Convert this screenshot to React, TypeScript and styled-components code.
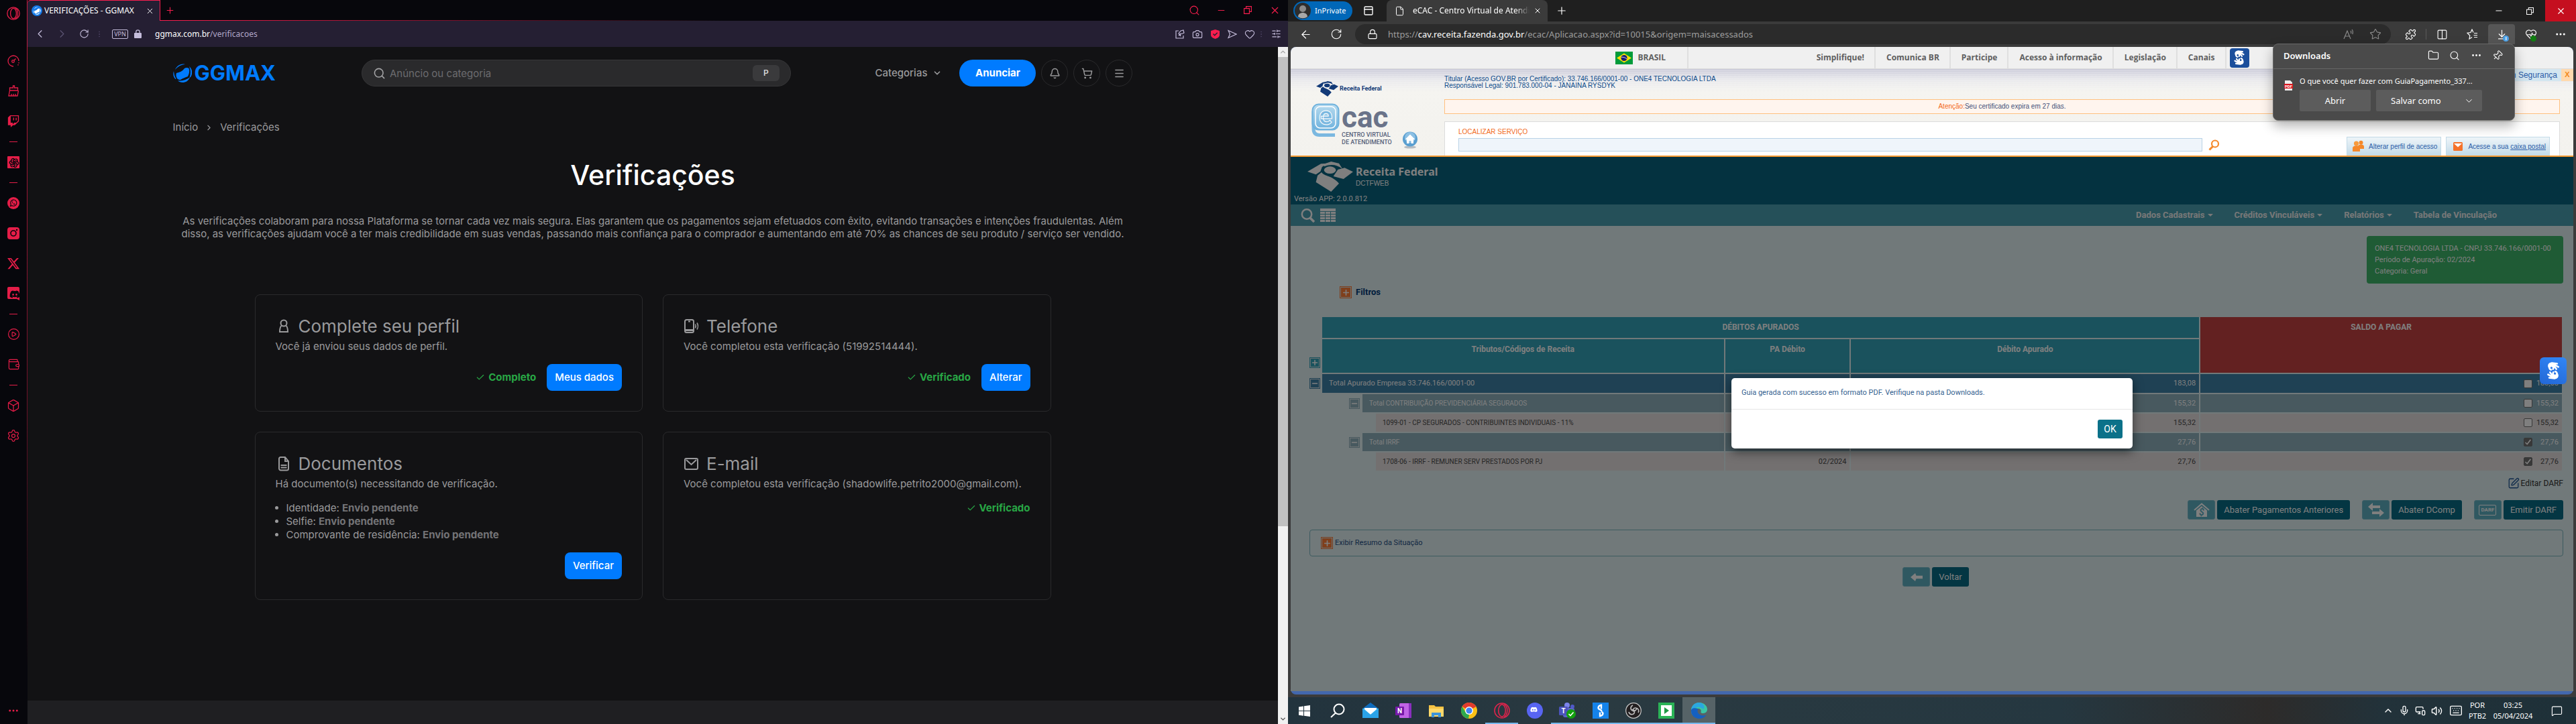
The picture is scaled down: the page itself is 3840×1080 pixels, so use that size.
import React from "react";
import styled, { createGlobalStyle, css } from "styled-components";
import {
  ArrowLeft, Bell, Camera, ChevronDown, ChevronLeft, ChevronRight, ChevronUp, Columns2, Box as BoxIcon,
  CirclePlay, EllipsisVertical, Ellipsis, File, Folder, Heart, HeartPulse, Keyboard, Lock, Menu,
  MessageSquare, Mic, Minus, Pin, Plus, Puzzle, RotateCw, Search, Settings, ShoppingCart,
  SlidersHorizontal, Star, Volume2, Wallet, X, ArrowDownToLine, SquarePen, PanelTop, Check, MonitorSmartphone,
} from "lucide-react";
import { FaDiscord, FaTwitch, FaXTwitter, FaHandsAslInterpreting } from "react-icons/fa6";
import { TbBrandOpenai } from "react-icons/tb";

const inter = `Inter, "Open Sans", sans-serif`;
const segoe = `"Noto Sans", "Open Sans", sans-serif`;
const ubuntu = `Roboto, "Noto Sans", sans-serif`;
const arial = `"Liberation Sans", Arial, sans-serif`;
const pink = "#fa1e4e";

const Global = createGlobalStyle`
  *, *::before, *::after { box-sizing: border-box; }
  body { margin: 0; background: #121214; overflow: hidden; }
  button, input { font: inherit; color: inherit; margin: 0; }
  button { border: 0; padding: 0; background: none; cursor: pointer; }
  a { color: inherit; text-decoration: none; }
  h1, h2, p, ul { margin: 0; padding: 0; }
  svg { display: block; flex: none; }
`;

const Desktop = styled.div`
  display: grid;
  grid-template-columns: 1fr 1fr;
  height: 100vh;
`;

const Cell = styled.button<{ $w: number; $h?: number }>`
  width: ${(p) => p.$w}px;
  height: ${(p) => (p.$h ? p.$h + "px" : "100%")};
  flex: none;
  display: flex;
  align-items: center;
  justify-content: center;
`;

/* ---------- Opera window ---------- */

const Opera = styled.section`
  display: flex;
  min-width: 0;
  background: #07070c;
`;

const Sidebar = styled.nav`
  width: 41px;
  flex: none;
  display: flex;
  flex-direction: column;
  align-items: stretch;
  color: #e51d48;
  border-right: 1px solid;
  border-image: linear-gradient(#c41a40, #6d1229 55%, #07070c 92%) 1;
`;

const SideTop = styled.div`
  height: 68px;
  display: flex;
  justify-content: center;
  padding-top: 10px;
`;

const SideItem = styled.button`
  height: 45px;
  display: flex;
  align-items: center;
  justify-content: center;
`;

const SideDash = styled.div`
  height: 16px;
  display: flex;
  align-items: center;
  justify-content: center;
  &::before { content: ""; width: 12px; height: 1px; background: #e51d48; }
`;

const SideEnd = styled(SideItem)`
  height: 40px;
  margin-top: auto;
`;

const OperaMain = styled.div`
  flex: 1;
  min-width: 0;
  display: flex;
  flex-direction: column;
`;

const OperaTitle = styled.div`
  height: 31px;
  flex: none;
  display: flex;
  color: ${pink};
`;

const OperaTab = styled.div`
  width: 198px;
  display: flex;
  align-items: center;
  padding: 0 8px 0 6px;
  background: #251f33;
  border: 1px solid ${pink};
  border-bottom: 0;
  border-left: 0;
  border-top-left-radius: 5px;
  color: #fff;
  font: 12px/16px ${segoe};
  span { flex: 1; padding-left: 3px; white-space: nowrap; }
`;

const OperaTitleRest = styled.div`
  flex: 1;
  display: flex;
  border-bottom: 1px solid;
  border-image: linear-gradient(90deg, ${pink}, #07070c 50%) 1;
`;

const Grow = styled.div`
  flex: 1;
`;

const OperaBar = styled.div`
  height: 39px;
  flex: none;
  display: flex;
  align-items: center;
  padding: 0 0 0 2px;
  background: #251f33;
  color: #c5bddb;
`;

const Dots = styled.span<{ $w: number }>`
  width: ${(p) => p.$w}px;
  display: flex;
  justify-content: center;
  color: #4a4160;
`;

const Vpn = styled.button`
  width: 24px;
  height: 14px;
  margin: 0 9px 0 13px;
  border: 1px solid #c5bddb;
  border-radius: 2px;
  font: 9px/11px ${segoe};
`;

const OperaUrl = styled.div`
  margin-left: 20px;
  font: 12px/16px ${segoe};
  color: #b1a8c9;
  b { font-weight: 400; color: #fff; }
`;

const OperaBody = styled.div`
  flex: 1;
  min-height: 0;
  display: flex;
`;

const Site = styled.div`
  flex: 1;
  min-width: 0;
  display: flex;
  flex-direction: column;
  background: #121214;
  color: #9a9a9c;
  font: 15px/20px ${inter};
`;

const SiteInner = styled.div`
  width: 100%;
  max-width: 1431px;
  margin: 0 auto;
  padding-top: 19px;
`;

const SiteHeader = styled.header`
  height: 40px;
  display: flex;
  align-items: center;
  justify-content: space-between;
`;

const Brand = styled.a`
  width: 156px;
  display: flex;
  align-items: center;
  gap: 4px;
  color: #007bff;
  font: 700 31px/28px ${inter};
`;

const SearchBox = styled.label`
  width: 640px;
  height: 40px;
  display: flex;
  align-items: center;
  gap: 6px;
  padding: 0 16px;
  border: 1px solid #363638;
  border-radius: 20px;
  background: #2a2a2c;
  input {
    flex: 1;
    height: 30px;
    border: 0;
    padding: 0;
    outline: 0;
    background: none;
    &::placeholder { color: #6c6c6f; opacity: 1; }
  }
  kbd {
    width: 40px;
    border-radius: 6px;
    background: #3a3a3c;
    color: #d5d5d6;
    text-align: center;
    font: 600 12px/24px ${inter};
  }
`;

const HeaderActions = styled.div`
  display: flex;
  align-items: center;
  gap: 8px;
`;

const Categories = styled.button`
  display: flex;
  align-items: center;
  gap: 8px;
  margin-right: 18px;
  font-weight: 500;
`;

const Announce = styled.button`
  width: 114px;
  height: 40px;
  border-radius: 20px;
  background: #007bff;
  color: #fff;
  font-weight: 700;
`;

const Round = styled.button`
  width: 40px;
  height: 40px;
  display: flex;
  align-items: center;
  justify-content: center;
  border: 1px solid #2a2a2c;
  border-radius: 50%;
`;

const Crumbs = styled.nav`
  display: flex;
  align-items: center;
  gap: 10px;
  margin-top: 51px;
`;

const PageTitle = styled.h1`
  margin: 36px 0 34px;
  text-align: center;
  color: #fff;
  font: 500 41px/50px ${inter};
`;

const Intro = styled.p`
  line-height: 19px;
  text-align: center;
`;

const Cards = styled.div`
  display: grid;
  grid-template-columns: 1fr 1fr;
  gap: 30px;
  max-width: 1187px;
  margin: 81px auto 0;
`;

const Card = styled.article`
  padding: 30px;
  border: 1px solid #2a2a2c;
  border-radius: 8px;
`;

const CardTitle = styled.h2`
  display: flex;
  align-items: center;
  gap: 10px;
  margin-bottom: 3px;
  font: 400 26px/34px ${inter};
`;

const DocList = styled.ul`
  margin-top: 16px;
  padding-left: 16px;
`;

const Pending = styled.strong`
  color: #747477;
  font-weight: 700;
`;

const CardFoot = styled.div`
  display: flex;
  align-items: center;
  justify-content: flex-end;
  gap: 16px;
  margin-top: 16px;
`;

const Status = styled.span`
  display: flex;
  align-items: center;
  gap: 5px;
  color: #28a745;
  font-weight: 700;
`;

const Primary = styled.button`
  height: 40px;
  padding: 0 12px;
  border-radius: 8px;
  background: #007bff;
  color: #fff;
  font-weight: 500;
`;

const SiteFooter = styled.footer`
  height: 35px;
  margin-top: auto;
  background: #1f1f22;
`;

const Scroll = styled.div`
  width: 15px;
  flex: none;
  display: flex;
  flex-direction: column;
  background: #f1f1f1;
  color: #a3a3a3;
`;

const Thumb = styled.div`
  height: 700px;
  margin-bottom: auto;
  background: #c1c1c1;
`;

/* ---------- Edge window ---------- */

const Right = styled.div`
  min-width: 0;
  display: flex;
  flex-direction: column;
`;

const Edge = styled.section`
  position: relative;
  flex: 1;
  min-height: 0;
  display: flex;
  flex-direction: column;
  background: #3b3b3b;
  color: #fff;
  font: 11px/16px ${segoe};
`;

const EdgeTabs = styled.div`
  height: 32px;
  flex: none;
  display: flex;
  align-items: center;
  padding-left: 8px;
  background: #1f1f1f;
`;

const Private = styled.button`
  width: 88px;
  height: 28px;
  display: flex;
  align-items: center;
  gap: 6px;
  padding-left: 2px;
  margin-right: 16px;
  border-radius: 14px;
  background: #0067b8;
`;

const EdgeTab = styled.div`
  width: 240px;
  height: 32px;
  display: flex;
  align-items: center;
  gap: 12px;
  margin-left: 19px;
  padding: 0 9px 0 12px;
  border-radius: 8px 8px 0 0;
  background: #3b3b3b;
  span {
    flex: 1;
    min-width: 0;
    overflow: hidden;
    white-space: nowrap;
    font-size: 12px;
    mask-image: linear-gradient(90deg, #000 88%, transparent);
  }
  button { margin-left: -6px; }
`;

const CloseWin = styled(Cell)`
  background: #c50f1f;
`;

const EdgeBar = styled.div`
  height: 38px;
  flex: none;
  display: flex;
  align-items: center;
  padding: 0 4px;
`;

const Address = styled.div`
  flex: 1;
  height: 30px;
  display: flex;
  align-items: center;
  margin: 0 6px 0 5px;
  padding: 0 4px 0 18px;
  border-radius: 15px;
  background: #2b2b2b;
  color: #9d9d9d;
  font-size: 13px;
  span { flex: 1; padding-left: 15px; white-space: nowrap; }
  b { font-weight: 400; color: #fff; }
`;

const BarLine = styled.i`
  width: 1px;
  height: 16px;
  background: #5a5a5a;
`;

const DownloadButton = styled.button`
  position: relative;
  width: 40px;
  height: 30px;
  margin: 0 0 0 2px;
  display: flex;
  align-items: center;
  justify-content: center;
  border-radius: 4px 4px 0 0;
  background: #565656;
`;

const Badge = styled.i<{ $c: string }>`
  position: absolute;
  right: 9px;
  bottom: 4px;
  width: 9px;
  height: 9px;
  border-radius: 50%;
  background: ${(p) => p.$c};
  font: bold 8px/9px ${arial};
  text-align: center;
`;

const HealthCell = styled(Cell)`
  position: relative;
  ${Badge} { right: 16px; bottom: 8px; }
`;

const EdgePage = styled.div`
  flex: 1;
  min-height: 0;
  display: flex;
  flex-direction: column;
  margin: 0 4px 4px;
  border-radius: 8px;
  overflow: hidden;
  background: #4367ad;
`;

const GovBar = styled.div`
  height: 33px;
  flex: none;
  background: #f0f0f0;
  border-bottom: 1px solid #dcdcdc;
  color: #606060;
  font: 700 12px/16px "Open Sans", ${segoe};
`;

const GovInner = styled.div`
  height: 32px;
  max-width: 945px;
  margin: 0 auto;
  display: flex;
  align-items: center;
`;

const Brasil = styled.a`
  height: 100%;
  display: flex;
  align-items: center;
  gap: 8px;
  margin-right: auto;
  padding-right: 32px;
  border-right: 2px solid #dfdfdf;
`;

const GovLink = styled.a`
  height: 100%;
  display: flex;
  align-items: center;
  padding: 0 15px 0 16px;
  border-right: 2px solid #dfdfdf;
`;

const Vlibras = styled.button<{ $float?: boolean }>`
  width: 29px;
  height: 29px;
  margin-left: 5px;
  display: flex;
  align-items: center;
  justify-content: center;
  border-radius: 4px;
  background: #1b4f9c;
  color: #fff;
  svg { rotate: 70deg; }
  ${(p) =>
    p.$float &&
    css`
      position: absolute;
      top: 299px;
      right: 10px;
      width: 40px;
      height: 40px;
      border-radius: 6px;
      background: linear-gradient(200deg, #3186f6, #2368d6);
    `}
`;

const CacHeader = styled.header`
  position: relative;
  height: 131px;
  flex: none;
  display: grid;
  grid-template-columns: 229px 1fr;
  padding-right: 20px;
  border-bottom: 2px solid #f59a31;
  background:
    repeating-linear-gradient(transparent 0 2px, rgba(255, 255, 255, 0.25) 2px 3px) 0 0 / 100% 32px no-repeat,
    linear-gradient(#ccccda, #e9e9ec 16px, #f5f4f0 34px, #f3f2ee);
  font: 10px/10px ${arial};
`;

const CacBrand = styled.div`
  display: flex;
  flex-direction: column;
  padding: 18px 0 0 31px;
`;

const RfSmall = styled.a`
  display: flex;
  align-items: center;
  gap: 2px;
  margin-left: 7px;
  color: #123a78;
  font: 700 9px/23px ${ubuntu};
`;

const EcacRow = styled.div`
  display: flex;
  align-items: flex-start;
  gap: 3px;
  margin-top: 10px;
`;

const EcacText = styled.div`
  width: 70px;
  margin-right: 17px;
  white-space: nowrap;
  color: #56617a;
  font: 500 9px/11px ${ubuntu};
  b { display: block; font: 700 44px/42px ${ubuntu}; color: #6a7389; }
`;

const HomeLink = styled.a`
  align-self: flex-end;
  margin-bottom: -4px;
`;

const CacMain = styled.div`
  min-width: 0;
  display: flex;
  flex-direction: column;
  padding-top: 10px;
  color: #0a4a8a;
`;

const Alert = styled.div`
  height: 22px;
  margin-top: 15px;
  border: 1px solid #ffc07f;
  background: #fff5ee;
  color: #44527a;
  text-align: center;
  line-height: 20px;
  span { color: #f26a1b; }
`;

const LocatePanel = styled.div`
  flex: 1;
  display: flex;
  align-items: flex-end;
  margin-top: 11px;
  padding: 0 14px 0 20px;
  border: 1px solid #dcdcdc;
  border-bottom: 0;
  background: #fff;
`;

const LocateField = styled.label`
  flex: 1;
  display: flex;
  flex-direction: column;
  gap: 4px;
  padding-bottom: 6px;
  color: #f26a1b;
  input {
    height: 20px;
    border: 1px solid #b9d2e6;
    background: #eff5fb;
  }
`;

const LocateGo = styled.button`
  margin: 0 182px 6px 9px;
`;

const TabLink = styled.a`
  height: 28px;
  display: flex;
  align-items: center;
  gap: 6px;
  padding: 0 5px 0 7px;
  margin-left: 7px;
  border: 1px solid #c3dbe8;
  border-bottom: 0;
  background: linear-gradient(#eef5f9, #c2dae8);
  color: #2a5ca8;
  white-space: nowrap;
`;

const ExitLink = styled.a`
  position: absolute;
  top: 0;
  right: 0;
  height: 18px;
  display: flex;
  background: #d3e6f0;
  color: #2a5ca8;
  font: 12px/18px ${arial};
  padding-left: 6px;
  gap: 6px;
  b { width: 18px; background: #ffd9ae; color: #f28a1b; text-align: center; font-size: 11px; line-height: 17px; }
`;

const Frame = styled.div`
  position: relative;
  flex: 1;
  min-height: 0;
  margin-bottom: 5px;
  display: flex;
  flex-direction: column;
  background: #e2f2f4;
  color: #fff;
  font: 11px/16px ${ubuntu};
`;

const AppHeader = styled.header`
  height: 71px;
  flex: none;
  padding: 4px 0 0 5px;
  background: #086480;
  color: #fff;
`;

const AppBrand = styled.div`
  display: flex;
  align-items: center;
  gap: 4px;
  height: 51px;
  margin-left: 20px;
  b { display: block; font: 700 16px/20px ${segoe}; }
  span { display: block; font: 10px/16px ${arial}; }
`;

const AppMenu = styled.nav`
  height: 32px;
  flex: none;
  display: flex;
  align-items: center;
  gap: 32px;
  padding: 0 114px 0 15px;
  background: #4aa0b2;
  color: #f0f0f0;
  font: 700 13px/16px ${ubuntu};
`;

const MenuTools = styled.div`
  flex: 1;
  display: flex;
  align-items: center;
  gap: 8px;
`;

const MenuLink = styled.a<{ $caret?: boolean }>`
  display: flex;
  align-items: center;
  gap: 4px;
  ${(p) =>
    p.$caret &&
    css`
      &::after {
        content: "";
        border: 4px solid transparent;
        border-top-color: currentColor;
        border-bottom: 0;
      }
    `}
`;

const Work = styled.main`
  padding: 15px 15px 0 26px;
  display: flex;
  flex-direction: column;
`;

const Company = styled.div`
  align-self: flex-end;
  min-width: 293px;
  padding: 10px 12px;
  border-radius: 4px;
  background: #3eb66a;
  line-height: 17px;
`;

const FilterTitle = styled.div`
  display: flex;
  align-items: center;
  gap: 6px;
  margin: 4px 0 26px 47px;
  color: #003a78;
  font: 700 13px/18px ${ubuntu};
`;

const Toggle = styled.button<{ $c: string; $s?: number }>`
  width: ${(p) => p.$s || 16}px;
  height: ${(p) => p.$s || 16}px;
  flex: none;
  display: flex;
  align-items: center;
  justify-content: center;
  border: 1px solid ${(p) => p.$c};
  background: ${(p) => p.$c};
  box-shadow: inset 0 0 0 1px #d8e4e6;
  color: #fff;
`;

const Table = styled.table`
  width: 100%;
  table-layout: fixed;
  border-spacing: 2px;
  th, td { padding: 0; }
`;

const Col = styled.col<{ $w: string }>`
  width: ${(p) => p.$w};
`;

const Th = styled.th<{ $c: string; $h: number }>`
  height: ${(p) => p.$h}px;
  padding: 7px 0 0 !important;
  background: ${(p) => p.$c};
  vertical-align: top;
  font: 700 12px/16px ${ubuntu};
`;

const ToggleHead = styled.td`
  vertical-align: bottom;
  padding-bottom: 7px !important;
`;

type Level = 0 | 1 | 2;
const levelBg = ["#3e82a8", "#90b2be", "#e6e0e0"];
const levelFg = ["#fff", "#fff", "#4a4a4a"];

const NameCell = styled.div<{ $l: Level }>`
  display: flex;
  align-items: center;
  gap: 4px;
  padding-left: ${(p) => p.$l * 40}px;
  color: ${(p) => levelFg[p.$l]};
  span {
    flex: 1;
    padding-left: 10px;
    background: ${(p) => levelBg[p.$l]};
    font-size: ${(p) => (p.$l ? 10 : 11)}px;
    line-height: ${(p) => (p.$l ? 27 : 28)}px;
    white-space: nowrap;
  }
`;

const NumCell = styled.td<{ $l: Level }>`
  padding-right: 5px !important;
  background: ${(p) => levelBg[p.$l]};
  color: ${(p) => levelFg[p.$l]};
  text-align: right;
`;

const Pay = styled.label`
  display: flex;
  align-items: center;
  justify-content: flex-end;
  span { width: 39px; }
  input {
    appearance: none;
    width: 13px;
    height: 13px;
    display: flex;
    align-items: center;
    justify-content: center;
    border: 1px solid #707070;
    border-radius: 2px;
    background: #fff;
    &:checked { background: #707070; }
    &:checked::before {
      content: "";
      width: 9px;
      height: 9px;
      background: #fff;
      clip-path: polygon(10% 50%, 0 62%, 36% 96%, 100% 16%, 86% 4%, 34% 72%);
    }
  }
`;

const EditLink = styled.a`
  align-self: flex-end;
  display: flex;
  align-items: center;
  gap: 2px;
  margin-top: 8px;
  color: #333;
  font-size: 12px;
  line-height: 18px;
  svg { color: #1c5494; }
`;

const Actions = styled.div<{ $center?: boolean }>`
  display: flex;
  justify-content: ${(p) => (p.$center ? "center" : "flex-end")};
  gap: 18px;
  margin-top: 16px;
`;

const Action = styled.button`
  display: flex;
  gap: 3px;
  height: 29px;
  font-size: 13px;
  line-height: 29px;
  i {
    width: 41px;
    height: 29px;
    display: flex;
    align-items: center;
    justify-content: center;
    border: 1px solid #78bccc;
    border-radius: 3px;
    background: #5eb0c2;
  }
  span { padding: 0 10px; border-radius: 3px; background: #086c86; }
`;

const DarfTag = styled.small`
  padding: 0 2px;
  border: 1px solid #fff;
  border-radius: 2px;
  font: 700 8px/14px ${ubuntu};
`;

const Summary = styled.div`
  display: flex;
  align-items: center;
  gap: 3px;
  height: 40px;
  margin: 15px 0 0 2px;
  padding-left: 16px;
  border: 1px solid #7ab6c0;
  border-radius: 4px;
  color: #1f4e84;
`;

const Shade = styled.div`
  position: absolute;
  inset: 0;
  display: flex;
  justify-content: center;
  align-items: flex-start;
  padding-top: 330px;
  background: rgba(0, 0, 0, 0.5);
`;

const Modal = styled.div`
  width: 598px;
  border-radius: 5px;
  background: #fff;
  color: #34618f;
  box-shadow: 0 5px 15px rgba(0, 0, 0, 0.5);
  p { padding: 14px 15px 16px; border-bottom: 1px solid #e5e5e5; }
  div { display: flex; justify-content: flex-end; padding: 15px; }
  button {
    width: 37px;
    height: 28px;
    border-radius: 3px;
    background: #0b7189;
    color: #fff;
    font-size: 14px;
  }
`;

const Popover = styled.div`
  position: absolute;
  top: 65px;
  right: 91px;
  width: 361px;
  height: 115px;
  border: 1px solid #696969;
  border-radius: 8px;
  background: #4a4a4a;
  box-shadow: 0 8px 18px rgba(0, 0, 0, 0.3);
`;

const PopHead = styled.div`
  display: flex;
  align-items: center;
  height: 37px;
  padding: 0 9px 3px 15px;
  border-bottom: 1px solid #666;
  font: 600 13px/16px ${segoe};
  b { flex: 1; font-weight: 600; }
`;

const PopBody = styled.div`
  display: grid;
  grid-template-columns: 13px 1fr;
  gap: 10px;
  padding: 9px 47px 0 16px;
  > svg { margin-top: 8px; }
  p { line-height: 18px; margin-bottom: 4px; white-space: nowrap; }
`;

const PopButtons = styled.div`
  display: grid;
  grid-template-columns: 106px 158px;
  gap: 8px;
  font-size: 13px;
  button { height: 32px; border-radius: 2px; background: #5c5c5c; }
  button + button { display: flex; align-items: center; justify-content: space-between; padding: 0 12px 0 22px; }
`;

/* ---------- Taskbar ---------- */

const TaskbarBox = styled.footer`
  height: 40px;
  flex: none;
  display: flex;
  align-items: stretch;
  background: linear-gradient(90deg, #22333d, #2a3a41 25%, #253740 60%, #2d2b2a 76%, #22323a 85%, #1e3038);
  color: #fff;
  font: 11px/16px ${segoe};
`;

const Task = styled.button<{ $open?: boolean; $active?: boolean }>`
  width: 49px;
  display: flex;
  align-items: center;
  justify-content: center;
  border-bottom: 2px solid ${(p) => (p.$open || p.$active ? "#76b9ed" : "transparent")};
  border-top: 2px solid transparent;
  background: ${(p) => (p.$active ? "#566367" : "none")};
`;

const Tray = styled.div`
  margin-left: auto;
  display: flex;
  align-items: center;
  text-align: center;
`;

const TrayText = styled.div<{ $w: number }>`
  width: ${(p) => p.$w}px;
`;

/* ---------- Drawings ---------- */

const OperaRing = ({ size = 20, color = "#e51d48" }) => (
  <svg width={size} height={size} viewBox="0 0 20 20" fill="none" stroke={color} strokeWidth="1.3">
    <circle cx="10" cy="10" r="9.2" />
    <ellipse cx="10" cy="10" rx="4.4" ry="7.6" />
    <path d="M12.5 2.2c3.6 1.6 4 4.6 4 7.8s-.4 6.2-4 7.8" />
  </svg>
);

const Gauge = () => (
  <svg width="18" height="18" viewBox="0 0 18 18" fill="none" stroke="currentColor" strokeWidth="1.3">
    <path d="M9 17a8 8 0 1 1 8-8" />
    <path d="M17 11v1.5M16 14v1.5" strokeDasharray="1.5 1" />
    <circle cx="8.5" cy="9.5" r="1.8" /><path d="m10 8 2.5-2.5" />
  </svg>
);

const Broom = () => (
  <svg width="17" height="17" viewBox="0 0 17 17" fill="none" stroke="currentColor" strokeWidth="1.3">
    <path d="M7.5 4V1h2v3h5v4h-12V4zM2.5 8l-1.5 8h13l1.5-8M5 16v-3M8 16v-3M11 16v-3" />
  </svg>
);

const Whats = () => (
  <svg width="18" height="18" viewBox="0 0 18 18">
    <circle cx="9" cy="9" r="9" fill="currentColor" />
    <path d="M4.5 13.5l.8-2.6a4.6 4.6 0 1 1 1.8 1.8z" fill="none" stroke="#07070c" strokeWidth="1.1" />
    <path d="M7.2 6.5c-.6 2 2 5 4 4.6l.3-1-1.4-.7-.6.6c-.8-.3-1.3-.9-1.6-1.6l.5-.6-.6-1.3z" fill="#07070c" />
  </svg>
);

const Insta = () => (
  <svg width="18" height="18" viewBox="0 0 18 18">
    <rect width="18" height="18" rx="4" fill="currentColor" />
    <circle cx="9" cy="9" r="4" fill="none" stroke="#07070c" strokeWidth="1.6" />
    <circle cx="14" cy="4" r="1.2" fill="#07070c" />
  </svg>
);

const DiscordTile = () => (
  <svg width="18" height="20" viewBox="0 0 18 20">
    <path d="M2 0h14a2 2 0 0 1 2 2v18l-4-2H2a2 2 0 0 1-2-2V2a2 2 0 0 1 2-2z" fill="currentColor" />
    <FaDiscord x="3" y="3" width="12" height="12" color="#07070c" />
  </svg>
);

const OpenAiTile = () => (
  <svg width="18" height="18" viewBox="0 0 18 18">
    <rect width="18" height="18" rx="1" fill="currentColor" />
    <TbBrandOpenai x="2" y="2" width="14" height="14" color="#07070c" />
  </svg>
);

const GgMark = ({ size = 28, bg }: { size?: number; bg?: boolean }) => (
  <svg width={size} height={size} viewBox="0 0 28 28" fill={bg ? "#fff" : "#007bff"}>
    {bg && <circle cx="14" cy="14" r="14" fill="#1479e8" />}
    <g transform={bg ? "translate(4 4) scale(.72)" : undefined}>
      <path d="M3 9C5 4 10 0 16 .5l2 .5c-6 .5-11 3-15 8z" />
      <path d="M5 14c5-1 9-3 12-7 2-1.500 5-1.500 6.500 0 1.500 4 .5 8-1.500 12-3 1-8 3-11 5-2 0-4-.5-5-2-1.500-2.500-2-5-1-8z" />
      <path d="M24 4c5 4 5.500 11 2 16l-1.500 1c2-6 2-12-.5-17zM1 11c-1.500 5-.5 9 2.500 12l1-.5C2 19 1.500 15 1 11z" />
      <path d="M7 25.500c7 .5 13-1.500 18-5-2 5-6 7.500-11 7.500-3 0-5-1-7-2.500z" />
    </g>
  </svg>
);

const PersonIcon = () => (
  <svg width="24" height="24" viewBox="0 0 24 24" fill="none" stroke="currentColor" strokeWidth="2">
    <circle cx="12" cy="7" r="4.5" />
    <path d="M9 10.5C6.5 12 6 15 6 20h12c0-5-.5-8-3-9.5" />
  </svg>
);

const PhoneIcon = () => (
  <svg width="24" height="24" viewBox="0 0 24 24" fill="none" stroke="currentColor" strokeWidth="2">
    <rect x="2" y="2" width="13" height="19" rx="2.5" />
    <path d="M3 17.5h11" strokeWidth="3" /><path d="M7 4.5h3" />
    <path d="M17.5 8.5c1 2 1 4 0 6M20 6.5c1.8 3 1.8 7 0 10" strokeWidth="1.5" />
  </svg>
);

const DocIcon = () => (
  <svg width="24" height="24" viewBox="0 0 24 24" fill="none" stroke="currentColor" strokeWidth="2">
    <path d="M7 2h7l5 6v11a2.5 2.5 0 0 1-2.5 2.5h-9A2.5 2.5 0 0 1 5 19V4.500A2.500 2.500 0 0 1 7 2zM14 3v5h4" />
    <path d="M7.5 14h9M7.5 17.5h9" />
  </svg>
);

const MailIcon = () => (
  <svg width="24" height="24" viewBox="0 0 24 24" fill="none" stroke="currentColor" strokeWidth="2">
    <rect x="2" y="4" width="19" height="16" rx="2" />
    <path d="m4 6 7.5 7L19 6" />
  </svg>
);

const Flag = () => (
  <svg width="26" height="19" viewBox="0 0 26 19">
    <rect width="26" height="19" fill="#009b3a" />
    <path d="M13 2.5 24 9.500 13 16.500 2 9.500z" fill="#fedf00" />
    <circle cx="13" cy="9.5" r="4.6" fill="#1c1f72" />
    <path d="M9 8.300c3-.4 6 .6 8 2.600" stroke="#cfd6ee" fill="none" />
  </svg>
);

const Eagle = ({ w, h }: { w: number; h: number }) => (
  <svg width={w} height={h} viewBox="0 0 162 135" preserveAspectRatio="none" fill="currentColor">
    <path d="M0 45 48 10 72 8 52 24 46 44 30 58z" />
    <path d="M56 12 84 0 112 8 124 32C104 14 84 10 60 22z" />
    <ellipse cx="80" cy="38" rx="21" ry="16" />
    <path d="M92 66 108 36 132 28 162 46 128 78z" />
    <path d="M36 62 50 48C62 68 88 62 112 98L84 135 30 92z" />
  </svg>
);

const EBadge = () => (
  <svg width="42" height="50" viewBox="0 0 42 50">
    <defs>
      <linearGradient id="eb" x1="0" y1="0" x2="0" y2="1">
        <stop offset="0" stopColor="#b7dbef" /><stop offset="1" stopColor="#6fb2dd" />
      </linearGradient>
    </defs>
    <path d="M3 12v26c0 6 3 9.500 9 9.500h23" fill="none" stroke="#7bb8e0" strokeWidth="5" />
    <rect x="1.5" y="1.5" width="39" height="38" rx="9" fill="url(#eb)" stroke="#6fb2dd" strokeWidth="2" />
    <rect x="6" y="5" width="30" height="32" rx="7" fill="none" stroke="#fff" strokeWidth="1.5" />
    <text x="21" y="32" textAnchor="middle" fontFamily="Roboto, sans-serif" fontWeight="700" fontSize="38" fill="#7bb8e0" stroke="#fff">e</text>
  </svg>
);

const HomeBall = () => (
  <svg width="24" height="26" viewBox="0 0 24 26">
    <ellipse cx="12" cy="23.5" rx="9" ry="2" fill="#b5bcc2" />
    <circle cx="12" cy="11.5" r="11" fill="#5a9fd0" /><circle cx="12" cy="9" r="8" fill="#8cc0e4" />
    <path d="m4.5 12 7.500-7.500 7.500 7.500h-2.500v6h-3.500v-4h-3v4H7v-6z" fill="#fff" />
  </svg>
);

const Lens = () => (
  <svg width="17" height="18" viewBox="0 0 17 18">
    <circle cx="10" cy="6.5" r="5" fill="#fff" stroke="#f58a2c" strokeWidth="2.2" />
    <path d="m6.5 10.500-5 5" stroke="#f58a2c" strokeWidth="3" />
  </svg>
);

const People = () => (
  <svg width="19" height="19" viewBox="0 0 19 19" fill="#f5882a">
    <circle cx="13.5" cy="3.8" r="3" /><path d="M9 13V9.500c0-4 9-4 9 0V13z" />
    <circle cx="6.5" cy="5" r="3.6" fill="#f79a3c" /><path d="M1 17v-5c0-5 11-5 11 0v5z" />
  </svg>
);

const Letter = () => (
  <svg width="19" height="18" viewBox="0 0 19 18">
    <rect x="3" y="2" width="14" height="13" rx="1.5" fill="#f5722a" />
    <path d="m4 4 6 5.500L16 4z" fill="#fff" />
  </svg>
);

const SheetIcon = () => (
  <svg width="23" height="20" viewBox="0 0 23 20" fill="#fff">
    <path d="M0 0h23v4H0z" />
    {[5, 9, 13, 17].map((y) => [0, 8, 16].map((x) => <path key={`${x}-${y}`} d={`M${x} ${y}h7v3h-7z`} />))}
  </svg>
);

const LensWhite = () => (
  <svg width="21" height="21" viewBox="0 0 21 21" fill="none" stroke="#fff">
    <circle cx="9" cy="8.5" r="7.2" strokeWidth="2.5" /><path d="m14 14 6 6" strokeWidth="3.5" />
  </svg>
);

const HousePay = () => (
  <svg width="24" height="21" viewBox="0 0 24 21">
    <path d="m1 11 11-9.500L23 11" fill="none" stroke="#fff" strokeWidth="2" />
    <path d="M4 11.500 12 5l8 6.500V21H4z" fill="#fff" />
    <text x="12" y="19" textAnchor="middle" fontFamily="Roboto, sans-serif" fontWeight="700" fontSize="14" fill="#5eb0c2">$</text>
  </svg>
);

const Swap = () => (
  <svg width="24" height="21" viewBox="0 0 24 21" fill="#fff">
    <path d="m0 6 7-6v4h11v4H7v4zM24 15l-7-6v4H6v4h11v4z" />
  </svg>
);

const BackArrow = () => (
  <svg width="18" height="12" viewBox="0 0 18 12" fill="#fff"><path d="m0 6 7-6 1.500 3.800H18v4.400H8.500L7 12z" /></svg>
);

const Avatar = () => (
  <svg width="24" height="24" viewBox="0 0 24 24">
    <circle cx="12" cy="12" r="12" fill="#2d2d2d" />
    <circle cx="12" cy="9" r="5" fill="#8b8b8b" /><path d="M5 21c0-8 14-8 14 0a12 12 0 0 1-14 0z" fill="#a8a8a8" />
  </svg>
);

const Restore = ({ size = 12 }) => (
  <svg width={size} height={size} viewBox="0 0 12 12" fill="none" stroke="currentColor" strokeWidth="1.1">
    <path d="M.6 3.600h7.800v7.800H.6zM3.600 3.600v-3h7.800v7.800h-3" />
  </svg>
);

const SendIcon = () => (
  <svg width="14" height="14" viewBox="0 0 14 14" fill="none" stroke="currentColor" strokeWidth="1.2">
    <path d="M1 1.500 13 7 1 12.500 3.500 7z" />
  </svg>
);

const ReadAloud = () => (
  <svg width="17" height="16" viewBox="0 0 17 16" fill="none" stroke="#8b8b8b" strokeWidth="1.2">
    <path d="m1 15 5-12 5 12M2.800 11h6.400M11 3c1 1 1 2.500.5 4M13 1c1.600 2 1.600 4.500.8 7" />
  </svg>
);

const StarList = () => (
  <svg width="17" height="17" viewBox="0 0 17 17" fill="none" stroke="currentColor" strokeWidth="1.2">
    <path d="M10 5.500 8 1 6 5.500l-5 .7L4.800 10 4 15l4-2.500M11 6.500h5M10.500 9.500H16M11 12.500h5" />
  </svg>
);

const PdfIcon = () => (
  <svg width="13" height="15" viewBox="0 0 13 15">
    <path d="M1 0h8l3 3v12H1z" fill="#eee" /><path d="M0 5h13v7H0z" fill="#d8141c" />
    <text x="6.5" y="10.8" textAnchor="middle" fontFamily="Roboto, sans-serif" fontWeight="700" fontSize="6" fill="#fff">PDF</text>
  </svg>
);

const ShieldIcon = () => (
  <svg width="13" height="14" viewBox="0 0 13 14">
    <path d="M6.500 0 13 2v6c0 3-3 5-6.500 6C3 13 0 11 0 8V2z" fill={pink} />
    <path d="m3.500 6.500 2.200 2.200 4-4" stroke="#251f33" strokeWidth="1.5" fill="none" />
  </svg>
);

const ShareIcon = () => (
  <svg width="14" height="14" viewBox="0 0 14 14" fill="none" stroke="currentColor" strokeWidth="1.2">
    <path d="M5 2H1v11h11V9M8 2l4-1 1 4-2 1-4 1 1 3-3-4zM5 9l3-3" />
  </svg>
);

const LockSolid = () => (
  <svg width="11" height="13" viewBox="0 0 11 13">
    <rect y="5" width="11" height="8" rx="1" fill="currentColor" />
    <path d="M2.800 6V3.500a2.700 2.700 0 0 1 5.400 0V6" fill="none" stroke="currentColor" strokeWidth="1.3" />
  </svg>
);

const WinLogo = () => (
  <svg width="17" height="17" viewBox="0 0 17 17" fill="#fff">
    <path d="m0 2.400 7-1v6.700H0zM8 1.300 17 0v8.100H8zM0 9h7v6.700l-7-1zM8 9h9v8l-9-1.300z" />
  </svg>
);

const SearchTask = () => (
  <svg width="22" height="22" viewBox="0 0 22 22" fill="none" stroke="#fff" strokeWidth="2">
    <circle cx="13" cy="9" r="7.5" /><path d="m8 14.500-7 6.500" />
  </svg>
);

const MailApp = () => (
  <svg width="24" height="24" viewBox="0 0 24 24">
    <path d="M0 9 12 0l12 9v13H0z" fill="#0f6cbd" /><path d="M0 9h24v14H0z" fill="#35b8f1" />
    <path d="M3 8h18v2l-9 8-9-8z" fill="#fff" /><path d="m0 9 12 9 12-9v14H0z" fill="#2ba3e8" />
  </svg>
);

const OneNote = () => (
  <svg width="24" height="22" viewBox="0 0 24 22">
    <rect x="6" width="18" height="22" rx="1.5" fill="#c163e6" /><path d="M20 0h4v22h-4z" fill="#8a2fbf" />
    <rect y="5" width="13" height="13" rx="1" fill="#7719aa" />
    <text x="6.5" y="15" textAnchor="middle" fontFamily="Roboto, sans-serif" fontWeight="700" fontSize="10" fill="#fff">N</text>
  </svg>
);

const Explorer = () => (
  <svg width="22" height="19" viewBox="0 0 22 19">
    <path d="M0 1h8l2 2h12v15H0z" fill="#f6c344" /><path d="M0 6h22v12H0z" fill="#ffd96a" />
    <path d="M4 19v-7h14v7h-4v-3H8v3z" fill="#3a93da" />
  </svg>
);

const Chrome = () => (
  <svg width="24" height="24" viewBox="0 0 24 24">
    <circle cx="12" cy="12" r="12" fill="#fbc116" />
    <path d="M12 12 1.600 6A12 12 0 0 1 22.400 6z" fill="#e33b2e" /><path d="M1.600 6 7 15l5 3-1 6A12 12 0 0 1 1.600 6z" fill="#2da94f" />
    <circle cx="12" cy="12" r="6" fill="#fff" /><circle cx="12" cy="12" r="4.6" fill="#4285f4" />
  </svg>
);

const DiscordApp = () => (
  <svg width="24" height="24" viewBox="0 0 24 24">
    <circle cx="12" cy="12" r="12" fill="#5865f2" /><FaDiscord x="5" y="5" width="14" height="14" color="#fff" />
  </svg>
);

const Teams = () => (
  <svg width="25" height="24" viewBox="0 0 25 24">
    <circle cx="12" cy="4" r="4" fill="#7b83eb" /><circle cx="20" cy="6" r="3" fill="#5059c9" />
    <rect x="6" y="8" width="17" height="14" rx="3" fill="#5b62c9" /><rect y="6" width="13" height="13" rx="1.5" fill="#4b53bc" />
    <text x="6.5" y="16" textAnchor="middle" fontFamily="Roboto, sans-serif" fontWeight="700" fontSize="10" fill="#fff">T</text>
    <circle cx="18" cy="17" r="7" fill="#13a10e" /><path d="m14.500 17 2.500 2.500 4.500-5" fill="none" stroke="#fff" strokeWidth="1.6" />
  </svg>
);

const Simplify = () => (
  <svg width="24" height="24" viewBox="0 0 24 24">
    <rect width="24" height="24" fill="#1583ea" />
    <path d="M14 4C8 4 7 9 11 10.500M13 2.500v7M10 20c6 0 7-5 3-6.500M11 21.500v-7M11 10.500l3 2" fill="none" stroke="#fff" strokeWidth="2.4" />
  </svg>
);

const Obs = () => (
  <svg width="24" height="24" viewBox="0 0 24 24">
    <circle cx="12" cy="12" r="11.3" fill="#231f20" stroke="#c9c9c9" strokeWidth="1.2" />
    <path d="M11 4c-4 2-4 7 0 8 3 1 6-1 6-4M5 14c1 4 6 5 8 2 1.500-3-.5-5-3-5.500M19 15c2-3 0-7-4-7-3 0-4.500 3-3 5.500" fill="none" stroke="#bdbdbd" strokeWidth="1.6" />
  </svg>
);

const Player = () => (
  <svg width="24" height="24" viewBox="0 0 24 24">
    <rect width="24" height="24" fill="#2bb357" /><rect x="4" y="4" width="16" height="16" fill="#fff" /><path d="m9 7 7 5-7 5z" fill="#1f9a45" />
  </svg>
);

const EdgeApp = () => (
  <svg width="24" height="24" viewBox="0 0 24 24">
    <path d="M12 0c7 0 12 5 12 10 0 4-3 6-6 6-3 0-4-1-3.500-2 1-3-1-5-4-5C6 9 1 10 0 12 0 5 5 0 12 0z" fill="#3bc6a5" />
    <path d="M12 0C5 0 0 5 0 12c0 3 1 5 2 7C1 11 6 6 12 7c4 .5 6 3 6 3 4-4-1-10-6-10z" fill="#2ba7e0" />
    <path d="M0 12c0 7 5 12 12 12 5 0 8-2 10.500-5.500-6 2.500-13-.5-13-6 0-1.500 1-3 1-3C6 7 0 8 0 12z" fill="#1560c0" />
  </svg>
);

/* ---------- Data ---------- */

const sideIcons: (React.ReactNode | "-")[] = [
  <Gauge />, <Broom />, <FaTwitch size={18} />, "-", <OpenAiTile />, "-", <Whats />, <Insta />, <FaXTwitter size={20} />,
  <DiscordTile />, "-", <CirclePlay size={19} strokeWidth={1.5} />, <Wallet size={19} strokeWidth={1.5} />, "-",
  <BoxIcon size={20} strokeWidth={1.5} />, <Settings size={20} strokeWidth={1.5} />,
];

const govLinks = ["Simplifique!", "Comunica BR", "Participe", "Acesso à informação", "Legislação", "Canais"];

const rows: { l: Level; name: string; pa?: string; value: string; on: boolean }[] = [
  { l: 0, name: "Total Apurado Empresa 33.746.166/0001-00", value: "183,08", on: false },
  { l: 1, name: "Total CONTRIBUIÇÃO PREVIDENCIÁRIA SEGURADOS", value: "155,32", on: false },
  { l: 2, name: "1099-01 - CP SEGURADOS - CONTRIBUINTES INDIVIDUAIS - 11%", pa: "02/2024", value: "155,32", on: false },
  { l: 1, name: "Total IRRF", value: "27,76", on: true },
  { l: 2, name: "1708-06 - IRRF - REMUNER SERV PRESTADOS POR PJ", pa: "02/2024", value: "27,76", on: true },
];

const Done = ({ children }: { children: React.ReactNode }) => (
  <Status><Check size={14} strokeWidth={2} />{children}</Status>
);

/* ---------- Windows ---------- */

function OperaWindow() {
  return (
    <Opera>
      <Sidebar>
        <SideTop><OperaRing /></SideTop>
        {sideIcons.map((ic, i) => (ic === "-" ? <SideDash key={i} /> : <SideItem key={i}>{ic}</SideItem>))}
        <SideEnd><Ellipsis size={18} /></SideEnd>
      </Sidebar>
      <OperaMain>
        <OperaTitle>
          <OperaTab>
            <GgMark size={16} bg /><span>VERIFICAÇÕES - GGMAX</span><X size={13} strokeWidth={1.8} />
          </OperaTab>
          <OperaTitleRest>
            <Cell $w={28} aria-label="Nova guia"><Plus size={15} strokeWidth={1.7} /></Cell>
            <Grow />
            <Cell $w={40} aria-label="Pesquisar"><Search size={17} strokeWidth={1.5} /></Cell>
            <Cell $w={40} aria-label="Minimizar"><Minus size={15} strokeWidth={1.5} /></Cell>
            <Cell $w={40} aria-label="Restaurar"><Restore /></Cell>
            <Cell $w={40} aria-label="Fechar"><X size={17} strokeWidth={1.5} /></Cell>
          </OperaTitleRest>
        </OperaTitle>
        <OperaBar>
          <Cell $w={33}><ChevronLeft size={19} strokeWidth={1.5} /></Cell>
          <Cell $w={33}><ChevronRight size={19} strokeWidth={1.5} color="#5c5473" /></Cell>
          <Cell $w={33}><RotateCw size={15} strokeWidth={1.7} /></Cell>
          <Dots $w={12}><EllipsisVertical size={12} /></Dots>
          <Vpn>VPN</Vpn>
          <LockSolid />
          <OperaUrl><b>ggmax.com.br</b>/verificacoes</OperaUrl>
          <Grow />
          <Cell $w={26}><ShareIcon /></Cell>
          <Cell $w={26}><Camera size={16} strokeWidth={1.7} /></Cell>
          <Cell $w={26}><ShieldIcon /></Cell>
          <Cell $w={26}><SendIcon /></Cell>
          <Cell $w={26}><Heart size={16} strokeWidth={1.6} /></Cell>
          <Dots $w={8}><EllipsisVertical size={12} /></Dots>
          <Cell $w={36}><SlidersHorizontal size={15} strokeWidth={1.8} /></Cell>
        </OperaBar>
        <OperaBody>
          <Site>
            <SiteInner>
              <SiteHeader>
                <Brand href="#"><GgMark />GGMAX</Brand>
                <SearchBox>
                  <Search size={19} color="#a5a5a7" />
                  <input placeholder="Anúncio ou categoria" aria-label="Buscar" />
                  <kbd>P</kbd>
                </SearchBox>
                <HeaderActions>
                  <Categories>Categorias<ChevronDown size={14} strokeWidth={3} /></Categories>
                  <Announce>Anunciar</Announce>
                  <Round aria-label="Notificações"><Bell size={17} /></Round>
                  <Round aria-label="Carrinho"><ShoppingCart size={17} /></Round>
                  <Round aria-label="Menu"><Menu size={17} /></Round>
                </HeaderActions>
              </SiteHeader>
              <Crumbs><a href="#">Início</a><ChevronRight size={13} />Verificações</Crumbs>
              <PageTitle>Verificações</PageTitle>
              <Intro>
                As verificações colaboram para nossa Plataforma se tornar cada vez mais segura. Elas garantem que os pagamentos sejam
                efetuados com êxito, evitando transações e intenções fraudulentas. Além disso, as verificações ajudam você a ter mais
                credibilidade em suas vendas, passando mais confiança para o comprador e aumentando em até 70% as chances de seu
                produto / serviço ser vendido.
              </Intro>
              <Cards>
                <Card>
                  <CardTitle><PersonIcon />Complete seu perfil</CardTitle>
                  <p>Você já enviou seus dados de perfil.</p>
                  <CardFoot><Done>Completo</Done><Primary>Meus dados</Primary></CardFoot>
                </Card>
                <Card>
                  <CardTitle><PhoneIcon />Telefone</CardTitle>
                  <p>Você completou esta verificação (51992514444).</p>
                  <CardFoot><Done>Verificado</Done><Primary>Alterar</Primary></CardFoot>
                </Card>
                <Card>
                  <CardTitle><DocIcon />Documentos</CardTitle>
                  <p>Há documento(s) necessitando de verificação.</p>
                  <DocList>
                    <li>Identidade: <Pending>Envio pendente</Pending></li>
                    <li>Selfie: <Pending>Envio pendente</Pending></li>
                    <li>Comprovante de residência: <Pending>Envio pendente</Pending></li>
                  </DocList>
                  <CardFoot><Primary>Verificar</Primary></CardFoot>
                </Card>
                <Card>
                  <CardTitle><MailIcon />E-mail</CardTitle>
                  <p>Você completou esta verificação (shadowlife.petrito2000@gmail.com).</p>
                  <CardFoot><Done>Verificado</Done></CardFoot>
                </Card>
              </Cards>
            </SiteInner>
            <SiteFooter />
          </Site>
          <Scroll>
            <Cell $w={15} $h={15} aria-label="Subir"><ChevronUp size={11} strokeWidth={3} /></Cell>
            <Thumb />
            <Cell $w={15} $h={15} aria-label="Descer"><ChevronDown size={11} strokeWidth={3} color="#505050" /></Cell>
          </Scroll>
        </OperaBody>
      </OperaMain>
    </Opera>
  );
}

function TaxTable() {
  return (
    <Table>
      <colgroup>
        <Col $w="17px" /><Col $w="32.2%" /><Col $w="10%" /><Col $w="27.9%" /><Col $w="auto" />
      </colgroup>
      <thead>
        <tr>
          <ToggleHead rowSpan={2}><Toggle $c="#34a4ba" aria-label="Expandir tudo"><Plus size={12} strokeWidth={3} /></Toggle></ToggleHead>
          <Th $c="#34a4ba" $h={31} colSpan={3}>DÉBITOS APURADOS</Th>
          <Th $c="#c64242" $h={83} rowSpan={2}>SALDO A PAGAR</Th>
        </tr>
        <tr>
          <Th $c="#34a4ba" $h={50}>Tributos/Códigos de Receita</Th>
          <Th $c="#34a4ba" $h={50}>PA Débito</Th>
          <Th $c="#34a4ba" $h={50}>Débito Apurado</Th>
        </tr>
      </thead>
      <tbody>
        {rows.map((r, i) => (
          <tr key={i}>
            <td>{r.l === 0 && <Toggle $c={levelBg[0]} aria-label="Recolher"><Minus size={12} strokeWidth={3} /></Toggle>}</td>
            <td>
              <NameCell $l={r.l}>
                {r.l === 1 && <Toggle $c={levelBg[1]} aria-label="Recolher"><Minus size={12} strokeWidth={3} /></Toggle>}
                <span>{r.name}</span>
              </NameCell>
            </td>
            <NumCell $l={r.l}>{r.pa}</NumCell>
            <NumCell $l={r.l}>{r.value}</NumCell>
            <NumCell $l={r.l}><Pay><input type="checkbox" defaultChecked={r.on} /><span>{r.value}</span></Pay></NumCell>
          </tr>
        ))}
      </tbody>
    </Table>
  );
}

function EdgeWindow() {
  return (
    <Edge>
      <EdgeTabs>
        <Private><Avatar />InPrivate</Private>
        <PanelTop size={16} strokeWidth={2} />
        <EdgeTab>
          <File size={15} strokeWidth={1.6} /><span>eCAC - Centro Virtual de Atendimento</span>
          <button aria-label="Fechar guia"><X size={12} /></button>
        </EdgeTab>
        <Cell $w={42} aria-label="Nova guia"><Plus size={18} strokeWidth={1.6} /></Cell>
        <Grow />
        <Cell $w={46} aria-label="Minimizar"><Minus size={14} strokeWidth={1.8} /></Cell>
        <Cell $w={46} aria-label="Restaurar"><Restore size={11} /></Cell>
        <CloseWin $w={46} aria-label="Fechar"><X size={15} strokeWidth={1.8} /></CloseWin>
      </EdgeTabs>
      <EdgeBar>
        <Cell $w={45}><ArrowLeft size={19} strokeWidth={1.5} /></Cell>
        <Cell $w={46}><RotateCw size={18} strokeWidth={1.5} /></Cell>
        <Address>
          <Lock size={16} strokeWidth={1.7} color="#fff" />
          <span>https://<b>cav.receita.fazenda.gov.br</b>/ecac/Aplicacao.aspx?id=10015&amp;origem=maisacessados</span>
          <Cell $w={39}><ReadAloud /></Cell>
          <Cell $w={39}><Star size={18} strokeWidth={1.5} color="#8b8b8b" /></Cell>
        </Address>
        <Cell $w={46}><Puzzle size={17} strokeWidth={1.6} /></Cell>
        <BarLine />
        <Cell $w={46}><Columns2 size={17} strokeWidth={1.6} /></Cell>
        <Cell $w={44}><StarList /></Cell>
        <DownloadButton aria-label="Downloads"><ArrowDownToLine size={17} strokeWidth={1.7} /><Badge $c="#4ea3e8">i</Badge></DownloadButton>
        <HealthCell $w={48}><HeartPulse size={18} strokeWidth={1.5} /><Badge $c="#107c10" /></HealthCell>
        <Cell $w={39}><Ellipsis size={18} /></Cell>
      </EdgeBar>
      <EdgePage>
        <GovBar>
          <GovInner>
            <Brasil href="#"><Flag />BRASIL</Brasil>
            {govLinks.map((t) => <GovLink href="#" key={t}>{t}</GovLink>)}
            <Vlibras aria-label="VLibras"><FaHandsAslInterpreting size={22} /></Vlibras>
          </GovInner>
        </GovBar>
        <CacHeader>
          <CacBrand>
            <RfSmall href="#"><Eagle w={33} h={23} />Receita Federal</RfSmall>
            <EcacRow>
              <EBadge />
              <EcacText><b>cac</b>CENTRO VIRTUAL<br />DE ATENDIMENTO</EcacText>
              <HomeLink href="#" aria-label="Início"><HomeBall /></HomeLink>
            </EcacRow>
          </CacBrand>
          <CacMain>
            <div>Titular (Acesso GOV.BR por Certificado): 33.746.166/0001-00 - ONE4 TECNOLOGIA LTDA</div>
            <div>Responsável Legal: 901.783.000-04 - JANAINA RYSDYK</div>
            <Alert><span>Atenção:</span>Seu certificado expira em 27 dias.</Alert>
            <LocatePanel>
              <LocateField>LOCALIZAR SERVIÇO<input /></LocateField>
              <LocateGo aria-label="Buscar serviço"><Lens /></LocateGo>
              <TabLink href="#"><People />Alterar perfil de acesso</TabLink>
              <TabLink href="#"><Letter /><span>Acesse a sua <u>caixa postal</u></span></TabLink>
            </LocatePanel>
          </CacMain>
          <ExitLink href="#">Sair com Segurança<b>X</b></ExitLink>
        </CacHeader>
        <Frame>
          <AppHeader>
            <AppBrand><Eagle w={68} h={45} /><div><b>Receita Federal</b><span>DCTFWEB</span></div></AppBrand>
            Versão APP: 2.0.0.812
          </AppHeader>
          <AppMenu>
            <MenuTools><LensWhite /><SheetIcon /></MenuTools>
            <MenuLink href="#" $caret>Dados Cadastrais</MenuLink>
            <MenuLink href="#" $caret>Créditos Vinculáveis</MenuLink>
            <MenuLink href="#" $caret>Relatórios</MenuLink>
            <MenuLink href="#">Tabela de Vinculação</MenuLink>
          </AppMenu>
          <Work>
            <Company>ONE4 TECNOLOGIA LTDA - CNPJ 33.746.166/0001-00<br />Período de Apuração: 02/2024<br />Categoria: Geral</Company>
            <FilterTitle><Toggle $c="#ff7f38" $s={18} aria-label="Abrir filtros"><Plus size={13} strokeWidth={3} /></Toggle>Filtros</FilterTitle>
            <TaxTable />
            <EditLink href="#"><SquarePen size={18} strokeWidth={1.7} />Editar DARF</EditLink>
            <Actions>
              <Action><i><HousePay /></i><span>Abater Pagamentos Anteriores</span></Action>
              <Action><i><Swap /></i><span>Abater DComp</span></Action>
              <Action><i><DarfTag>DARF</DarfTag></i><span>Emitir DARF</span></Action>
            </Actions>
            <Summary><Toggle $c="#ff7f38" $s={18} aria-label="Abrir resumo"><Plus size={13} strokeWidth={3} /></Toggle>Exibir Resumo da Situação</Summary>
            <Actions $center><Action><i><BackArrow /></i><span>Voltar</span></Action></Actions>
          </Work>
          <Shade>
            <Modal role="dialog">
              <p>Guia gerada com sucesso em formato PDF. Verifique na pasta Downloads.</p>
              <div><button>OK</button></div>
            </Modal>
          </Shade>
          <Vlibras $float aria-label="Abrir VLibras"><FaHandsAslInterpreting size={26} /></Vlibras>
        </Frame>
      </EdgePage>
      <Popover>
        <PopHead>
          <b>Downloads</b>
          <Cell $w={32}><Folder size={17} strokeWidth={1.6} /></Cell>
          <Cell $w={32}><Search size={16} strokeWidth={1.6} /></Cell>
          <Cell $w={32}><Ellipsis size={17} /></Cell>
          <Cell $w={32}><Pin size={16} strokeWidth={1.6} transform="rotate(45)" /></Cell>
        </PopHead>
        <PopBody>
          <PdfIcon />
          <div>
            <p>O que você quer fazer com GuiaPagamento_337...</p>
            <PopButtons><button>Abrir</button><button>Salvar como<ChevronDown size={15} strokeWidth={1.6} /></button></PopButtons>
          </div>
        </PopBody>
      </Popover>
    </Edge>
  );
}

function Taskbar() {
  return (
    <TaskbarBox>
      <Task><WinLogo /></Task>
      <Task><SearchTask /></Task>
      <Task><MailApp /></Task>
      <Task><OneNote /></Task>
      <Task><Explorer /></Task>
      <Task><Chrome /></Task>
      <Task $open><OperaRing size={24} color="#e0244c" /></Task>
      <Task><DiscordApp /></Task>
      <Task $open><Teams /></Task>
      <Task $open><Simplify /></Task>
      <Task $open><Obs /></Task>
      <Task $open><Player /></Task>
      <Task $active><EdgeApp /></Task>
      <Tray>
        <Cell $w={25}><ChevronUp size={16} /></Cell>
        <Cell $w={24}><Mic size={16} /></Cell>
        <Cell $w={24}><MonitorSmartphone size={16} /></Cell>
        <Cell $w={25}><Volume2 size={17} /></Cell>
        <Cell $w={31}><Keyboard size={20} strokeWidth={1.6} /></Cell>
        <TrayText $w={34}>POR<br />PTB2</TrayText>
        <TrayText $w={72}>03:25<br />05/04/2024</TrayText>
        <Cell $w={58}><MessageSquare size={17} strokeWidth={1.6} /></Cell>
      </Tray>
    </TaskbarBox>
  );
}

export default function App() {
  return (
    <>
      <Global />
      <Desktop>
        <OperaWindow />
        <Right>
          <EdgeWindow />
          <Taskbar />
        </Right>
      </Desktop>
    </>
  );
}
